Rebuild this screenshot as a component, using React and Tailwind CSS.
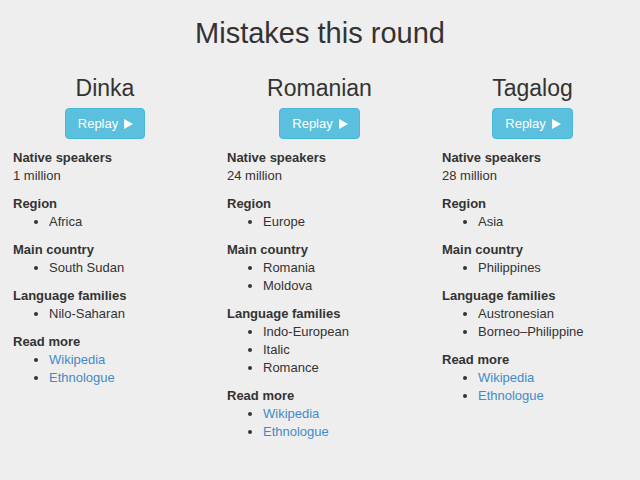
import React from 'react';

const languages = [
  {
    name: 'Dinka',
    speakers: '1 million',
    region: ['Africa'],
    countries: ['South Sudan'],
    families: ['Nilo-Saharan'],
  },
  {
    name: 'Romanian',
    speakers: '24 million',
    region: ['Europe'],
    countries: ['Romania', 'Moldova'],
    families: ['Indo-European', 'Italic', 'Romance'],
  },
  {
    name: 'Tagalog',
    speakers: '28 million',
    region: ['Asia'],
    countries: ['Philippines'],
    families: ['Austronesian', 'Borneo–Philippine'],
  },
];

function Section({ title, children }) {
  return (
    <div className="mb-[10px]">
      <div className="font-bold">{title}</div>
      {children}
    </div>
  );
}

function Bullets({ items, links }) {
  return (
    <ul className="list-disc pl-[36px]">
      {items.map((item) => (
        <li key={item}>
          {links ? <a href="#" className="text-[#428bca]">{item}</a> : item}
        </li>
      ))}
    </ul>
  );
}

function LanguageColumn({ lang }) {
  return (
    <div>
      <div className="pr-[4px]">
        <h2 className="text-center text-[23px] leading-[28px] text-[#333]">{lang.name}</h2>
        <div className="flex justify-center mt-[6px]">
          <button className="flex items-center gap-[6px] h-[31px] pl-[12px] pr-[11px] rounded-[4px] bg-[#5bc0de] border border-[#46b8da] text-white text-[13px]">
            Replay
            <svg width="9" height="10" viewBox="0 0 9 10">
              <path d="M0 0 L9 5 L0 10 Z" fill="white" />
            </svg>
          </button>
        </div>
      </div>
      <div className="mt-[10px] pl-[13px] text-[13px] leading-[18px] text-[#333]">
        <Section title="Native speakers">
          <div>{lang.speakers}</div>
        </Section>
        <Section title="Region">
          <Bullets items={lang.region} />
        </Section>
        <Section title="Main country">
          <Bullets items={lang.countries} />
        </Section>
        <Section title="Language families">
          <Bullets items={lang.families} />
        </Section>
        <Section title="Read more">
          <Bullets items={['Wikipedia', 'Ethnologue']} links />
        </Section>
      </div>
    </div>
  );
}

export default function App() {
  return (
    <div className="min-h-screen bg-[#eeeeee] text-[#333] font-['Liberation_Sans',Arial,sans-serif]">
      <h1 className="pt-[15px] text-center text-[29px] leading-[36px]">Mistakes this round</h1>
      <div className="grid grid-cols-[214px_215px_1fr] mt-[23px]">
        {languages.map((lang) => (
          <LanguageColumn key={lang.name} lang={lang} />
        ))}
      </div>
    </div>
  );
}
